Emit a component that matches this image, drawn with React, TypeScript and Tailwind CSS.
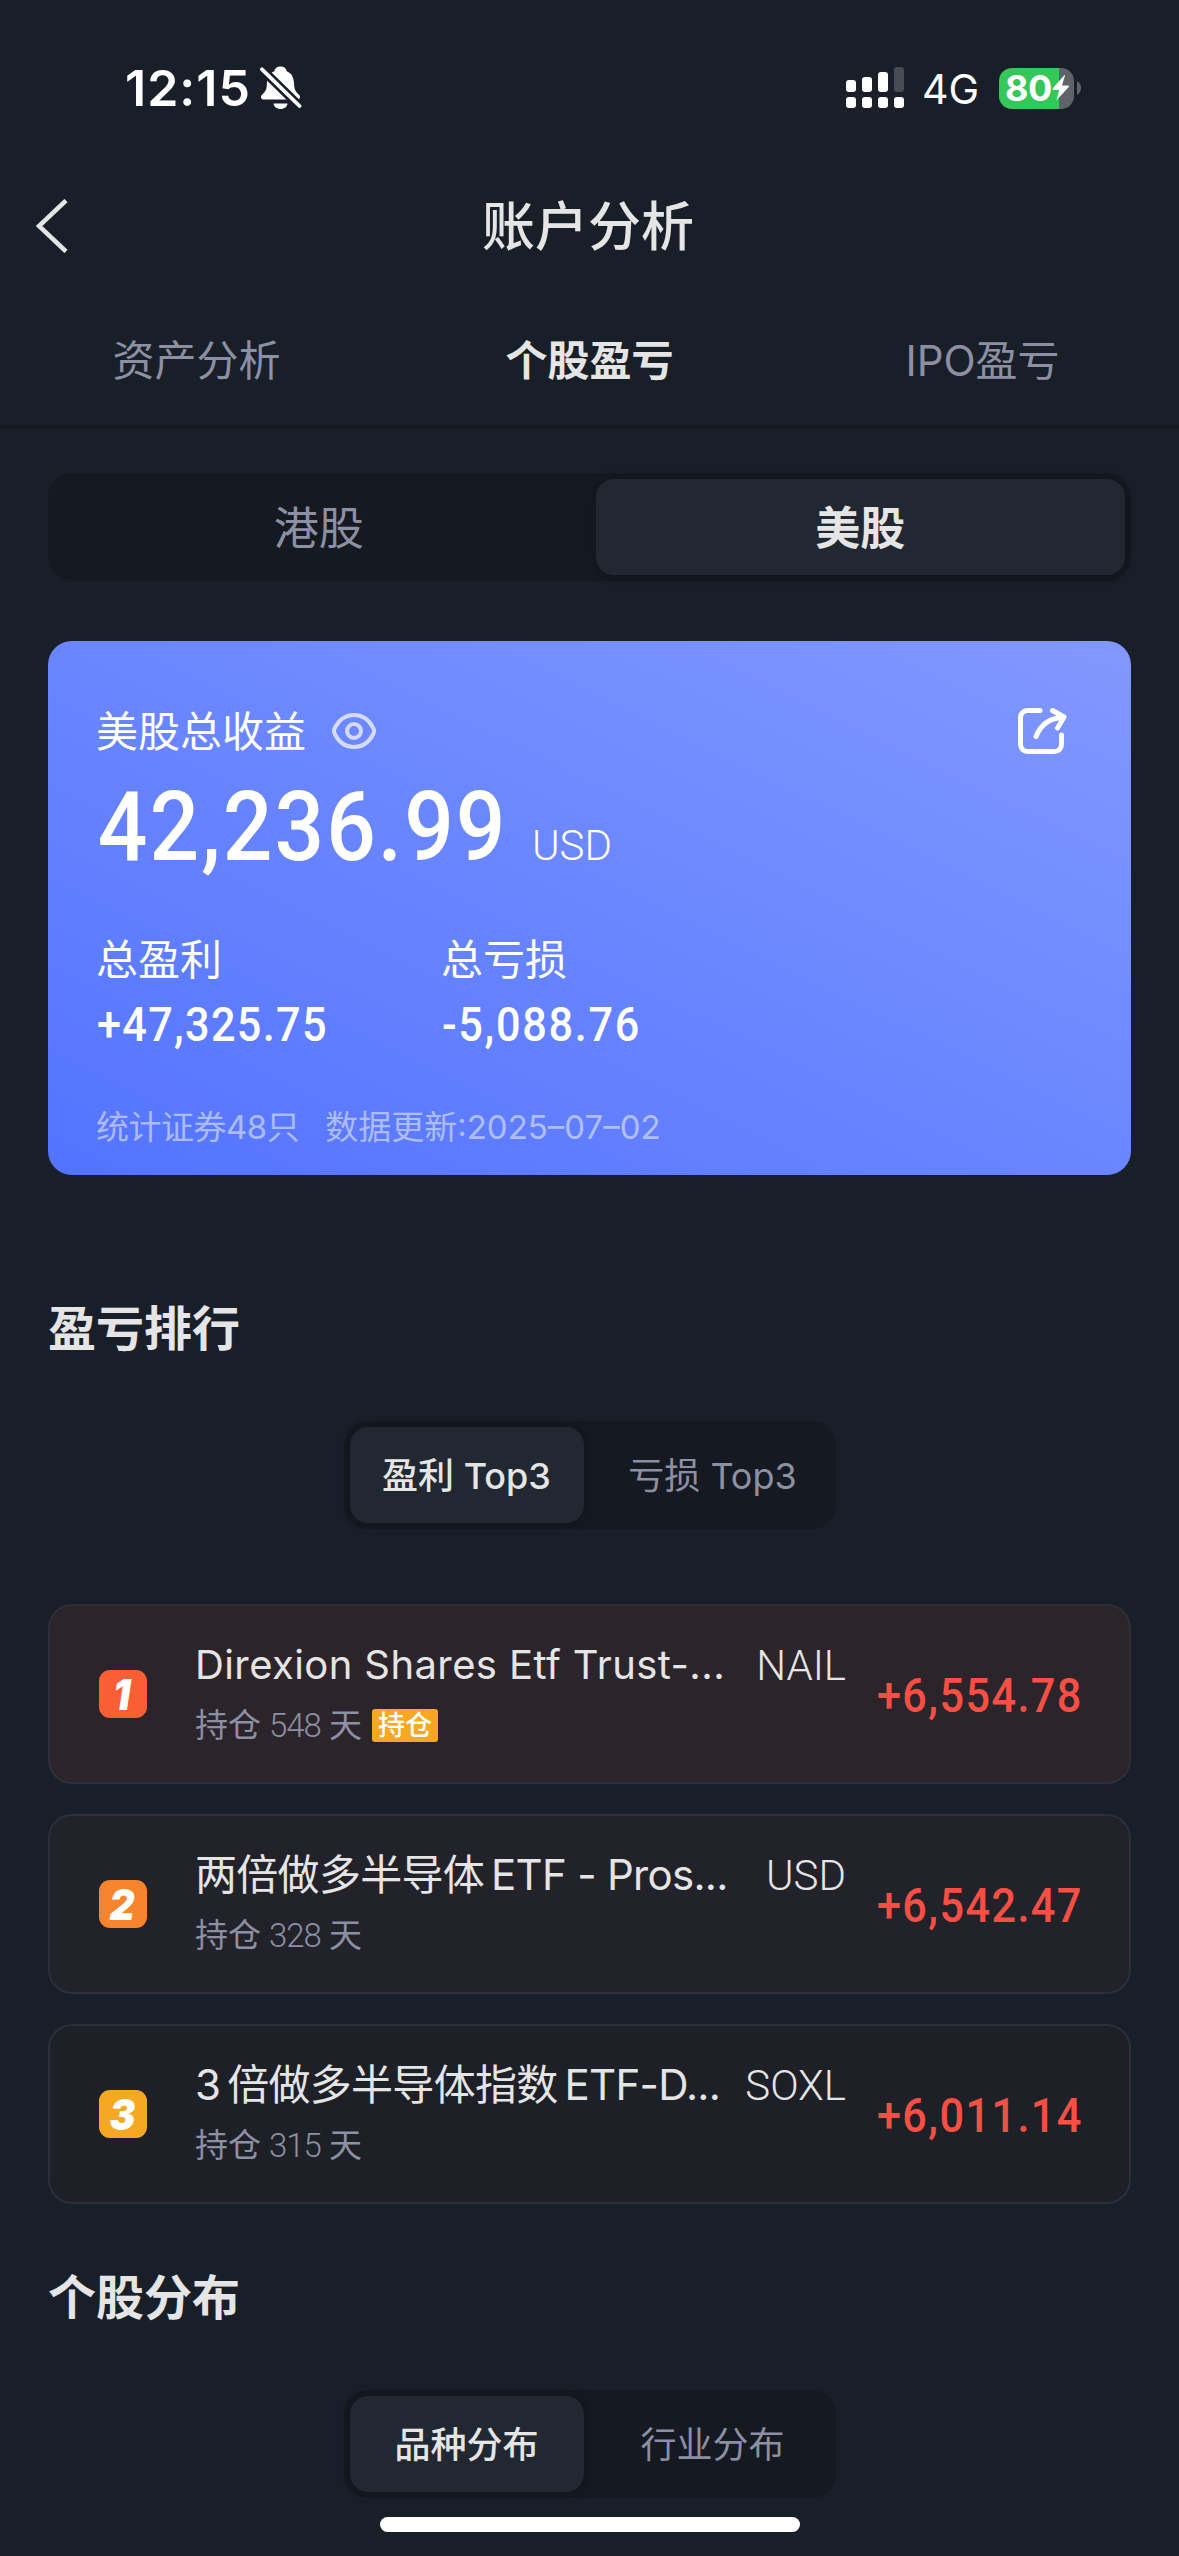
import { useState } from "react";

type Holding = {
  rank: number;
  name: string;
  symbol: string;
  days: number;
  profit: string;
  open: boolean;
  rowClass: string;
  badgeClass: string;
  nameClass: string;
};

const tabs = ["资产分析", "个股盈亏", "IPO盈亏"];

const holdings: Holding[] = [
  {
    rank: 1,
    name: "Direxion Shares Etf Trust-...",
    symbol: "NAIL",
    days: 548,
    profit: "+6,554.78",
    open: true,
    rowClass: "bg-[#2b242a]",
    badgeClass: "bg-[#fa5e34]",
    nameClass: "text-[40px] tracking-[0.4px]",
  },
  {
    rank: 2,
    name: "两倍做多半导体\u2009ETF - Pros...",
    symbol: "USD",
    days: 328,
    profit: "+6,542.47",
    open: false,
    rowClass: "bg-[#22222a]",
    badgeClass: "bg-[#f8842b]",
    nameClass: "text-[42px] tracking-[-0.7px]",
  },
  {
    rank: 3,
    name: "3\u2009倍做多半导体指数\u2009ETF-D...",
    symbol: "SOXL",
    days: 315,
    profit: "+6,011.14",
    open: false,
    rowClass: "bg-[#1e2028]",
    badgeClass: "bg-[#f7a823]",
    nameClass: "text-[42px] tracking-[-0.7px]",
  },
];

function BellOffIcon() {
  return (
    <svg width="42" height="44" viewBox="0 0 42 44" fill="none">
      <path
        d="M20.500 0.500c-3.600 0-5.700 2-6.200 4.800C8.500 7.500 7 12.500 6.800 19.500c-.2 4.500-2 6.500-4.500 9-2.300 2.300-1.500 5 1.700 5h33c3.200 0 4-2.700 1.700-5-2.500-2.500-4.300-4.500-4.500-9-.2-7-1.700-12-7.500-14.200C26.200 2.500 24.100.5 20.500.5Z"
        fill="#fff"
      />
      <path d="M13.500 37.500h14c-.5 3.200-3 5.500-7 5.500s-6.500-2.300-7-5.500Z" fill="#fff" />
      <path d="M-4-2.500 45 45.500" stroke="#191f29" strokeWidth="9" />
      <path d="M2 3.300 39.500 40" stroke="#fff" strokeWidth="3.800" strokeLinecap="round" />
    </svg>
  );
}

function SignalIcon() {
  return (
    <svg width="58" height="42" viewBox="0 0 58 42" fill="#fff">
      <rect x="0" y="13" width="10" height="12" rx="3" />
      <rect x="16" y="10" width="10" height="15" rx="3" />
      <rect x="32" y="5" width="10" height="20" rx="3" />
      <rect x="48" y="0" width="10" height="25" rx="3" fill="#484b53" />
      <rect x="0" y="30" width="10" height="11" rx="3" />
      <rect x="16" y="30" width="10" height="11" rx="3" />
      <rect x="32" y="30" width="10" height="11" rx="3" />
      <rect x="48" y="30" width="10" height="11" rx="3" />
    </svg>
  );
}

function Battery() {
  return (
    <div className="flex items-center gap-[3px]">
      <div className="flex h-[41px] w-[75px] items-center rounded-[13px] bg-[linear-gradient(to_right,#34c759_60px,#5f6269_60px)] pl-[6px]">
        <span className="text-[36px] leading-none font-bold tracking-[-0.5px]">80</span>
        <svg className="shrink-0" width="18" height="26" viewBox="0 0 18 26" fill="#fff">
          <path d="M12.500 0 .8 13.300c-.6.700-.2 1.600.7 1.600h5.700L4.300 25.600 16.700 12c.6-.7.200-1.600-.7-1.600h-6L13 .6Z" />
        </svg>
      </div>
      <svg width="4" height="14" viewBox="0 0 4 14" fill="#5f6269">
        <path d="M0 0c2.400 1.200 4 3.800 4 7s-1.600 5.800-4 7Z" />
      </svg>
    </div>
  );
}

function EyeIcon() {
  return (
    <svg width="44" height="36" viewBox="0 0 44 36" fill="none" stroke="#d4dbff" strokeWidth="4">
      <path d="M22 2C31 2 37 7 41 14.500Q43 18 41 21.500C37 29 31 34 22 34S7 29 3 21.500Q1 18 3 14.500C7 7 13 2 22 2Z" />
      <circle cx="22" cy="18" r="7" />
    </svg>
  );
}

function ShareIcon() {
  return (
    <svg
      width="50"
      height="48"
      viewBox="0 0 50 48"
      fill="none"
      stroke="#fff"
      strokeWidth="5"
      strokeLinecap="round"
      strokeLinejoin="round"
    >
      <path d="M23 3.500H10.500a7 7 0 0 0-7 7V37.500a7 7 0 0 0 7 7H37.500a7 7 0 0 0 7-7V28" />
      <path d="M19 29.500C23.500 18 33 11 46 10.500" />
      <path d="M35.500 3.500 47 10 40.500 21" />
    </svg>
  );
}

type SegmentedProps = {
  items: string[];
  active: number;
  onChange: (idx: number) => void;
  className: string;
  activeClass: string;
};

function Segmented({ items, active, onChange, className, activeClass }: SegmentedProps) {
  return (
    <div className={`flex h-[108px] gap-3 rounded-3xl bg-[#151921] p-1.5 ${className}`}>
      {items.map((item, idx) => (
        <button
          key={item}
          type="button"
          onClick={() => onChange(idx)}
          className={`flex-1 rounded-[18px] pt-0.5 leading-none whitespace-nowrap ${
            idx === active
              ? `bg-[#212831] text-[#e5e5e5] shadow-[0_0_12px_rgba(10,12,18,0.35)] ${activeClass}`
              : "text-[#8d8fa3]"
          }`}
        >
          {item}
        </button>
      ))}
    </div>
  );
}

function HoldingRow({ item }: { item: Holding }) {
  return (
    <li
      className={`flex h-[180px] items-center rounded-3xl border-2 border-[#2d2e38] pr-[46px] pl-[49px] ${item.rowClass}`}
    >
      <div
        className={`flex size-12 items-center justify-center rounded-[11px] pr-0.5 leading-none font-black text-white italic ${item.badgeClass}`}
      >
        <span className="scale-x-90 text-[43px] leading-none">{item.rank}</span>
      </div>
      <div className="ml-[48px] flex w-[651px] flex-col pt-0.5">
        <div className="flex h-[52px] items-center justify-between">
          <span className={`leading-none whitespace-nowrap ${item.nameClass}`}>{item.name}</span>
          <span className="pt-[3px] font-['Roboto'] text-[42px] leading-none font-light">
            {item.symbol}
          </span>
        </div>
        <div className="mt-[9px] flex h-[52px] items-center text-[33px] leading-none text-[#8d8fa3]">
          <span>持仓</span>
          <span className="mx-2 font-['Roboto'] font-light tracking-[-1px]">{item.days}</span>
          <span>天</span>
          {item.open && (
            <span className="ml-2.5 flex h-[33px] items-center rounded-[3px] bg-[#f7a823] px-1.5 text-[27px] leading-none font-medium text-white">
              持仓
            </span>
          )}
        </div>
      </div>
      <span className="ml-auto origin-right scale-x-90 pt-1 font-['Roboto'] text-[48px] leading-none font-medium tracking-[1.600px] text-[#f84f45]">
        {item.profit}
      </span>
    </li>
  );
}

export default function App() {
  const [tab, setTab] = useState(1);
  const [market, setMarket] = useState(1);
  const [ranking, setRanking] = useState(0);
  const [distribution, setDistribution] = useState(0);

  return (
    <div
      lang="zh-CN"
      className="flex h-[2556px] w-[1179px] flex-col overflow-hidden bg-[#191f29] font-['Inter','Noto_Sans_CJK_SC',sans-serif] text-[#e5e5e5]"
    >
      {/* Status bar */}
      <div className="flex h-[176px] items-center justify-between pr-[98px] pl-[125px] text-white">
        <div className="flex items-center gap-[9px]">
          <span className="text-[50px] leading-none font-semibold tracking-[1px]">12:15</span>
          <BellOffIcon />
        </div>
        <div className="flex items-center gap-5">
          <div className="-mr-0.5">
            <SignalIcon />
          </div>
          <span className="pt-0.5 text-[41px] leading-none">4G</span>
          <Battery />
        </div>
      </div>

      {/* Title bar */}
      <header className="grid h-[100px] grid-cols-3 items-center">
        <button type="button" className="pl-9">
          <svg width="32" height="54" viewBox="0 0 32 54" fill="none" stroke="#e5e5e5" strokeWidth="4.500">
            <path d="M30 1.500 3 27l27 25.500" />
          </svg>
        </button>
        <h1 className="pt-[3px] pr-[3px] text-center text-[53px] leading-none font-medium">账户分析</h1>
      </header>

      {/* Tabs */}
      <nav className="grid h-[152px] grid-cols-3 border-b-3 border-[#151821]">
        {tabs.map((name, idx) => (
          <button
            key={name}
            type="button"
            onClick={() => setTab(idx)}
            className={`pt-5 text-[42px] leading-none ${
              idx === tab ? "font-bold" : "text-[#8d8fa3]"
            }`}
          >
            {name}
          </button>
        ))}
      </nav>

      <main className="flex flex-col px-12 pt-[45px]">
        <Segmented
          items={["港股", "美股"]}
          active={market}
          onChange={setMarket}
          className="text-[45px]"
          activeClass="font-bold"
        />

        {/* Total profit card */}
        <section className="mt-15 flex h-[534px] flex-col rounded-3xl bg-linear-to-tr from-[#5373ff] to-[#8298ff] px-12 pt-[64px] text-white">
          <div className="flex h-[52px] items-center">
            <span className="pt-0.5 text-[42px] leading-none">美股总收益</span>
            <span className="ml-[26px]">
              <EyeIcon />
            </span>
            <span className="mr-4 ml-auto">
              <ShareIcon />
            </span>
          </div>
          <div className="mt-[19px] flex h-[102px] items-baseline font-['Roboto']">
            <span className="w-[436px] shrink-0 origin-left scale-x-90 pl-0.5 text-[97px] leading-[102px] font-medium tracking-[2.300px]">
              42,236.99
            </span>
            <span className="text-[42px] font-light">USD</span>
          </div>
          <div className="mt-[54px] flex">
            <div className="w-[345px]">
              <div className="text-[42px] leading-[56px]">总盈利</div>
              <div className="origin-left scale-x-90 pl-px font-['Roboto'] text-[48px] leading-[74px] font-medium tracking-[1.500px]">
                +47,325.75
              </div>
            </div>
            <div>
              <div className="text-[42px] leading-[56px]">总亏损</div>
              <div className="origin-left scale-x-90 pl-px font-['Roboto'] text-[48px] leading-[74px] font-medium tracking-[1.900px]">
                -5,088.76
              </div>
            </div>
          </div>
          <div className="mt-[43px] flex gap-[26px] text-[33px] leading-[44px] text-white/50">
            <span className="tracking-[-0.5px]">统计证券48只</span>
            <span>数据更新:2025–07–02</span>
          </div>
        </section>

        {/* Ranking */}
        <h2 className="mt-[122px] h-[64px] text-[48px] leading-[64px] font-bold">盈亏排行</h2>
        <Segmented
          items={["盈利 Top3", "亏损 Top3"]}
          active={ranking}
          onChange={setRanking}
          className="mt-[60px] w-[492px] self-center text-[36px]"
          activeClass="font-medium"
        />
        <ul className="mt-[75px] flex flex-col gap-[30px]">
          {holdings.map((item) => (
            <HoldingRow key={item.rank} item={item} />
          ))}
        </ul>

        {/* Distribution */}
        <h2 className="mt-[62px] h-[64px] text-[48px] leading-[64px] font-bold">个股分布</h2>
        <Segmented
          items={["品种分布", "行业分布"]}
          active={distribution}
          onChange={setDistribution}
          className="mt-[60px] w-[492px] self-center text-[36px]"
          activeClass="font-medium"
        />
      </main>

      {/* Home indicator */}
      <div className="mt-[19px] h-[15px] w-[420px] shrink-0 self-center rounded-full bg-white" />
    </div>
  );
}
